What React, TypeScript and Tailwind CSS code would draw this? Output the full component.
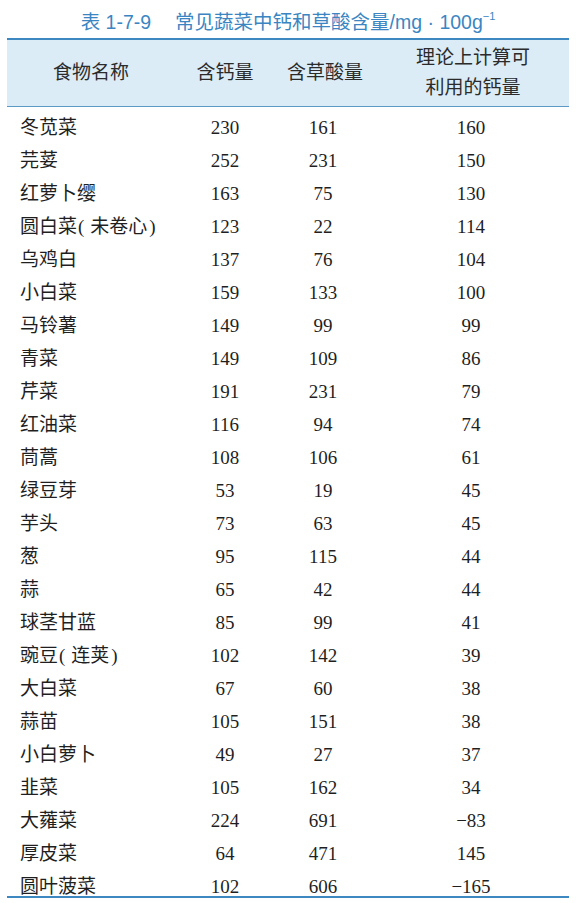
const rows: [string, string, string, string][] = [
  ["冬苋菜", "230", "161", "160"],
  ["芫荽", "252", "231", "150"],
  ["红萝卜缨", "163", "75", "130"],
  ["圆白菜(未卷心)", "123", "22", "114"],
  ["乌鸡白", "137", "76", "104"],
  ["小白菜", "159", "133", "100"],
  ["马铃薯", "149", "99", "99"],
  ["青菜", "149", "109", "86"],
  ["芹菜", "191", "231", "79"],
  ["红油菜", "116", "94", "74"],
  ["茼蒿", "108", "106", "61"],
  ["绿豆芽", "53", "19", "45"],
  ["芋头", "73", "63", "45"],
  ["葱", "95", "115", "44"],
  ["蒜", "65", "42", "44"],
  ["球茎甘蓝", "85", "99", "41"],
  ["豌豆(连荚)", "102", "142", "39"],
  ["大白菜", "67", "60", "38"],
  ["蒜苗", "105", "151", "38"],
  ["小白萝卜", "49", "27", "37"],
  ["韭菜", "105", "162", "34"],
  ["大蕹菜", "224", "691", "−83"],
  ["厚皮菜", "64", "471", "145"],
  ["圆叶菠菜", "102", "606", "−165"],
];

const sans = "font-['Liberation_Sans','Noto_Sans_CJK_SC',sans-serif]";
const serif = "font-['Liberation_Serif','Noto_Sans_CJK_SC',serif]";

// names like 圆白菜(未卷心) get a little air inside the brackets, as in print
function Name({ text }: { text: string }) {
  const m = text.match(/^(.*)\((.*)\)$/);
  if (!m) return <>{text}</>;
  return (
    <>
      {m[1]}
      <span className="ml-[1px] mr-[6px]">(</span>
      {m[2]}
      <span className="ml-[2px]">)</span>
    </>
  );
}

export default function App() {
  return (
    <div className="w-[576px] h-[903px] bg-white px-[7px] overflow-hidden">
      <div
        className={`${sans} h-[38px] pt-[7px] flex items-center justify-center text-[19.5px] text-[#3b86c2]`}
      >
        <span>表 1-7-9</span>
        <span className="ml-[24px]">
          常见蔬菜中钙和草酸含量/mg · 100g
          <sup className="text-[11px] -top-[9px]">−1</sup>
        </span>
      </div>

      <div className="border-t-2 border-[#3d88c0]">
        <div
          className={`${sans} grid grid-cols-[168px_100px_100px_196px] h-[67px] items-center bg-[#dbecf6] border-b border-[#5a9ac4] text-[19px] text-[#2b2b2b]`}
        >
          <div className="text-center">食物名称</div>
          <div className="text-center">含钙量</div>
          <div className="text-center">含草酸量</div>
          <div className="text-center leading-[30px]">
            理论上计算可
            <br />
            利用的钙量
          </div>
        </div>

        <div
          className={`${serif} h-[791px] pt-[5px] border-b-2 border-[#3d88c0] text-[19px] text-[#1f1f1f]`}
        >
          {rows.map((r) => (
            <div
              key={r[0]}
              className="grid grid-cols-[178px_80px_116px_180px] h-[33px] items-center"
            >
              <div className="pl-[13px] whitespace-nowrap">
                <Name text={r[0]} />
              </div>
              <div className="text-center">{r[1]}</div>
              <div className="text-center">{r[2]}</div>
              <div className="text-center">{r[3]}</div>
            </div>
          ))}
        </div>
      </div>
    </div>
  );
}
